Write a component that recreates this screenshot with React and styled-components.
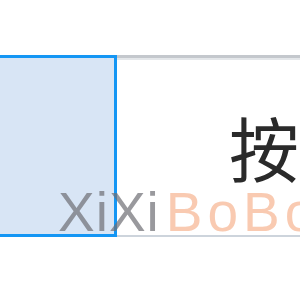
import React from "react";
import styled, { createGlobalStyle } from "styled-components";

const Global = createGlobalStyle`
  html, body { margin: 0; padding: 0; background: #ffffff; }
  body { width: 300px; height: 300px; overflow: hidden; font-family: "Liberation Sans", "Noto Sans CJK SC", sans-serif; }
`;

const Page = styled.div`
  position: relative;
  width: 300px;
  height: 300px;
  padding-top: 55px;
  box-sizing: border-box;
  overflow: hidden;
`;

const Row = styled.div`
  display: flex;
  height: 182px;
  width: 420px;
`;

const SelectedCell = styled.div`
  flex: 0 0 auto;
  width: 121px;
  margin-left: -4px;
  box-sizing: border-box;
  border: 3px solid #1496f4;
  background: #d8e5f5;
`;

const Cell = styled.div`
  flex: 1;
  display: flex;
  align-items: center;
  box-sizing: border-box;
  padding-left: 112px;
  border-top: 3px solid #c4c8cd;
  border-bottom: 2px solid #cdd4dc;
  box-shadow: inset 0 2px 0 #e4e7ea;
  font-family: "Noto Sans CJK SC", sans-serif;
  font-size: 70px;
  color: #2a2a2a;
  line-height: 1;
`;

const Watermark = styled.div`
  position: absolute;
  left: 58px;
  top: 185px;
  font-family: "Liberation Sans", sans-serif;
  font-size: 55px;
  line-height: 1;
  white-space: nowrap;
  pointer-events: none;
`;

const Part = styled.span`
  color: ${(p) => p.$color};
  letter-spacing: ${(p) => p.$spacing}px;
  margin-left: ${(p) => p.$offset || 0}px;
`;

export default function App() {
  return (
    <>
      <Global />
      <Page>
        <Row>
          <SelectedCell />
          <Cell>按钮</Cell>
        </Row>
        <Watermark>
          <Part $color="rgba(110,110,115,0.7)" $spacing={1}>XiXi</Part>
          <Part $color="rgba(244,150,100,0.5)" $spacing={5} $offset={6}>BoBo</Part>
        </Watermark>
      </Page>
    </>
  );
}
